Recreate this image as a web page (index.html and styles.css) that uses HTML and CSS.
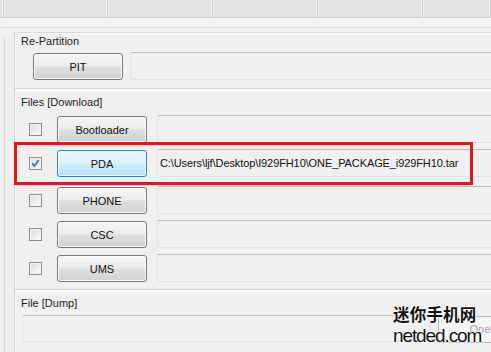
FILE: index.html
```html
<!DOCTYPE html>
<html>
<head>
<meta charset="utf-8">
<link rel="stylesheet" href="styles.css">
</head>
<body>
<div class="tabs">
  <div class="tab t0"></div>
  <div class="tab t1"></div>
  <div class="tab t2"></div>
  <div class="tab t3"></div>
  <div class="tab t4"></div>
  <div class="tab t5"></div>
</div>
<div class="under"></div>
<div class="main">
  <div class="strip"></div>
  <div class="panel">
    <div class="label l1">Re-Partition</div>
    <div class="row pitrow">
      <div class="btn">PIT</div>
      <div class="field"></div>
    </div>
    <div class="sep s1"></div>
    <div class="label l2">Files [Download]</div>
    <div class="row frow r1">
      <span class="cb"></span>
      <div class="btn">Bootloader</div>
      <div class="field"></div>
    </div>
    <div class="row frow r2">
      <span class="cb checked"><svg width="11" height="11" viewBox="0 0 11 11"><path d="M2.2 5.2 L4.3 8.2 L8.6 2.2" fill="none" stroke="#4a5d8f" stroke-width="1.6"/></svg></span>
      <div class="btn hot">PDA</div>
      <div class="field"><span class="path">C:\Users\ljf\Desktop\I929FH10\ONE_PACKAGE_i929FH10.tar</span></div>
    </div>
    <div class="row frow r3">
      <span class="cb"></span>
      <div class="btn">PHONE</div>
      <div class="field"></div>
    </div>
    <div class="row frow r4">
      <span class="cb"></span>
      <div class="btn">CSC</div>
      <div class="field"></div>
    </div>
    <div class="row frow r5">
      <span class="cb"></span>
      <div class="btn">UMS</div>
      <div class="field"></div>
    </div>
    <div class="sep s2"></div>
    <div class="label l3">File [Dump]</div>
    <div class="row dumprow">
      <div class="field dumpfield"></div>
      <div class="btn disabled">Open</div>
    </div>
  </div>
</div>
<div class="highlight"></div>
<div class="watermark">
  <div class="wm-cn">迷你手机网</div>
  <div class="wm-en">netded.com</div>
</div>
</body>
</html>
```
FILE: styles.css
```css
html, body {
  margin: 0;
  padding: 0;
}
body {
  width: 491px;
  height: 352px;
  overflow: hidden;
  background: #f0f0f0;
  font-family: "Liberation Sans", Arial, sans-serif;
  font-size: 11px;
  color: #1a1a1a;
  position: relative;
}
.tabs {
  display: flex;
  height: 18px;
  background: #f3f3f3;
}
.tab {
  height: 18px;
  box-sizing: border-box;
  background: #e3e3e3;
  border-right: 1px solid #c8c8c8;
  border-bottom: 1px solid #d0d0d0;
  box-shadow: inset -1px 0 0 #f6f6f6;
  margin-right: 1px;
  flex: none;
}
.t0 { width: 4px; }
.t1 { width: 103px; }
.t2 { width: 104px; }
.t3 { width: 104px; }
.t4 { width: 104px; }
.t5 { flex: 1; margin-right: 0; }
.under {
  height: 9px;
  border-bottom: 1px solid #d6d6d6;
  background: #f4f4f4;
}
.main {
  display: flex;
  padding-top: 4px;
  width: 491px;
}
.strip {
  flex: none;
  width: 4px;
  margin-right: 9px;
  margin-top: 5px;
  border-right: 1px solid #d8d8d8;
  height: 320px;
}
.panel {
  flex: 1;
  min-width: 0;
  border-left: 1px solid #d5d5d5;
  border-top: 1px solid #d9d9d9;
  box-shadow: inset 1px 1px 0 #fafafa;
  padding-left: 6px;
  padding-bottom: 4px;
  border-bottom: 1px solid #d6d6d6;
  display: flex;
  flex-direction: column;
}
.label {
  height: 13px;
  line-height: 13px;
  color: #1e1e1e;
}
.l1 { margin-top: 2px; }
.l2 { margin-top: 5px; }
.l3 { margin-top: 5px; }
.row {
  display: flex;
  align-items: center;
  height: 28px;
}
.pitrow { margin-top: 4px; padding-left: 12px; }
.pitrow .field { margin-left: 7px; }
.sep {
  height: 2px;
  border-top: 1px solid #d5d5d5;
  background: #fafafa;
  margin-left: -6px;
}
.s1 { margin-top: 8px; }
.s2 { margin-top: 7px; }
.frow { padding-left: 8px; }
.r1 { margin-top: 6px; }
.r2 { margin-top: 6px; }
.r3 { margin-top: 9px; }
.r4 { margin-top: 6px; }
.r5 { margin-top: 6px; }
.cb {
  width: 13px;
  height: 13px;
  box-sizing: border-box;
  border: 1px solid #8f8f8f;
  background: linear-gradient(135deg, #dcdcdc, #f8f8f8);
  box-shadow: inset 0 0 0 1px #f4f4f4;
  margin-right: 15px;
  display: flex;
  align-items: center;
  justify-content: center;
  flex: none;
}
.cb svg { display: block; }
.btn {
  width: 90px;
  height: 27px;
  box-sizing: border-box;
  flex: none;
  border: 1px solid #7a7a7a;
  border-radius: 3px;
  background: linear-gradient(#f6f6f6 0%, #ececec 45%, #dedede 55%, #d2d2d2 100%);
  box-shadow: inset 0 0 0 1px #fbfbfb;
  display: flex;
  align-items: center;
  justify-content: center;
  color: #111;
  margin-top: 1px;
}
.btn.hot {
  border-color: #3c7fb1;
  background: linear-gradient(#eef8fe 0%, #def2fd 45%, #cbebfd 55%, #b8e2f8 100%);
  box-shadow: inset 0 0 0 1px #f4fbff;
}
.btn.disabled {
  border-color: #b5b5b5;
  background: #f4f4f4;
  color: #a8a8a8;
  box-shadow: none;
}
.field {
  flex: 1;
  min-width: 0;
  overflow: hidden;
  height: 28px;
  box-sizing: border-box;
  margin-left: 10px;
  border: 1px solid #e2e3e5;
  border-top-color: #bdbdbd;
  border-right: none;
  border-radius: 2px 0 0 2px;
  background: #f0f0f0;
  display: flex;
  align-items: center;
  padding-left: 2px;
}
.path {
  color: #111;
  white-space: nowrap;
  margin-top: -1px;
  font-size: 11px;
  letter-spacing: -0.1px;
}
.dumprow { margin-top: 5px; height: 27px; }
.dumpfield {
  flex: none;
  width: 408px;
  height: 27px;
  margin-left: 1px;
  border-right: 1px solid #e2e3e5;
  border-radius: 2px;
  margin-right: 8px;
}
.highlight {
  position: absolute;
  left: 14px;
  top: 142px;
  width: 459px;
  height: 43px;
  box-sizing: border-box;
  border: 3px solid #df1820;
}
.watermark {
  position: absolute;
  left: 393px;
  top: 304px;
  color: #111;
  text-shadow: 0 0 2px #fff, 0 0 2px #fff, 0 0 3px #fff;
}
.wm-cn {
  font-family: "Noto Sans CJK SC", sans-serif;
  font-weight: bold;
  font-size: 16.5px;
  line-height: 21px;
  letter-spacing: 0.2px;
}
.wm-en {
  font-family: "Liberation Sans", Arial, sans-serif;
  font-size: 19px;
  line-height: 20px;
  letter-spacing: -1.1px;
  margin-top: 1px;
}
```
